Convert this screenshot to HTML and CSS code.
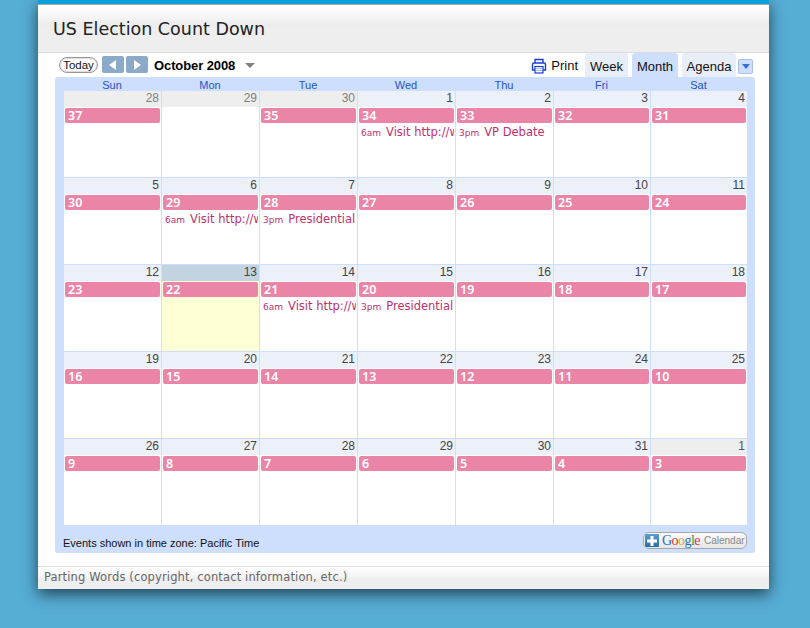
FILE: index.html
```html
<!DOCTYPE html>
<html lang="en">
<head>
<meta charset="utf-8">
<title>US Election Count Down</title>
<link rel="stylesheet" href="styles.css">
</head>
<body>
<div class="window">
  <header class="head"><h1>US Election Count Down</h1></header>
  <main class="main">
    <div class="toolbar">
      <div class="nav">
        <button class="today">Today</button>
        <span class="navbtn"><svg width="8" height="10" viewBox="0 0 8 10"><path d="M7 0v10L0 5z" fill="#fff"/></svg></span>
        <span class="navbtn"><svg width="8" height="10" viewBox="0 0 8 10"><path d="M1 0v10l7-5z" fill="#fff"/></svg></span>
        <span class="month">October 2008</span>
        <span class="caret"></span>
      </div>
      <div class="tabs">
        <svg class="printer" width="16" height="16" viewBox="0 0 16 16"><path d="M4 5V1.500h8V5M4 12H1.500V6.500q0-1.500 1.500-1.500h10q1.500 0 1.500 1.500V12H12" fill="none" stroke="#1a3fd8" stroke-width="1.400"/><rect x="4" y="8.500" width="8" height="6.500" fill="#fff" stroke="#1a3fd8" stroke-width="1.200"/><path d="M5.500 10.500h5M5.500 12.500h5" stroke="#5a78e0" stroke-dasharray="1 1"/></svg>
        <span class="print">Print</span>
        <span class="tab week">Week</span>
        <span class="tab active">Month</span>
        <span class="tab agenda">Agenda</span>
        <span class="menu"><span class="menu-caret"></span></span>
      </div>
    </div>
    <div class="cal">
      <div class="dows">
        <span>Sun</span><span>Mon</span><span>Tue</span><span>Wed</span><span>Thu</span><span>Fri</span><span>Sat</span>
      </div>
      <div class="grid">
        <div class="cell"><div class="date off">28</div><div class="bar">37</div></div>
        <div class="cell"><div class="date off">29</div></div>
        <div class="cell"><div class="date off">30</div><div class="bar">35</div></div>
        <div class="cell"><div class="date">1</div><div class="bar">34</div><div class="ev"><small>6am</small>Visit http://www.example</div></div>
        <div class="cell"><div class="date">2</div><div class="bar">33</div><div class="ev"><small>3pm</small>VP Debate</div></div>
        <div class="cell"><div class="date">3</div><div class="bar">32</div></div>
        <div class="cell"><div class="date">4</div><div class="bar">31</div></div>

        <div class="cell"><div class="date">5</div><div class="bar">30</div></div>
        <div class="cell"><div class="date">6</div><div class="bar">29</div><div class="ev"><small>6am</small>Visit http://www.example</div></div>
        <div class="cell"><div class="date">7</div><div class="bar">28</div><div class="ev"><small>3pm</small>Presidential Debate</div></div>
        <div class="cell"><div class="date">8</div><div class="bar">27</div></div>
        <div class="cell"><div class="date">9</div><div class="bar">26</div></div>
        <div class="cell"><div class="date">10</div><div class="bar">25</div></div>
        <div class="cell"><div class="date">11</div><div class="bar">24</div></div>

        <div class="cell"><div class="date">12</div><div class="bar">23</div></div>
        <div class="cell today-cell"><div class="date">13</div><div class="bar">22</div></div>
        <div class="cell"><div class="date">14</div><div class="bar">21</div><div class="ev"><small>6am</small>Visit http://www.example</div></div>
        <div class="cell"><div class="date">15</div><div class="bar">20</div><div class="ev"><small>3pm</small>Presidential Debate</div></div>
        <div class="cell"><div class="date">16</div><div class="bar">19</div></div>
        <div class="cell"><div class="date">17</div><div class="bar">18</div></div>
        <div class="cell"><div class="date">18</div><div class="bar">17</div></div>

        <div class="cell"><div class="date">19</div><div class="bar">16</div></div>
        <div class="cell"><div class="date">20</div><div class="bar">15</div></div>
        <div class="cell"><div class="date">21</div><div class="bar">14</div></div>
        <div class="cell"><div class="date">22</div><div class="bar">13</div></div>
        <div class="cell"><div class="date">23</div><div class="bar">12</div></div>
        <div class="cell"><div class="date">24</div><div class="bar">11</div></div>
        <div class="cell"><div class="date">25</div><div class="bar">10</div></div>

        <div class="cell"><div class="date">26</div><div class="bar">9</div></div>
        <div class="cell"><div class="date">27</div><div class="bar">8</div></div>
        <div class="cell"><div class="date">28</div><div class="bar">7</div></div>
        <div class="cell"><div class="date">29</div><div class="bar">6</div></div>
        <div class="cell"><div class="date">30</div><div class="bar">5</div></div>
        <div class="cell"><div class="date">31</div><div class="bar">4</div></div>
        <div class="cell"><div class="date off last">1</div><div class="bar">3</div></div>
      </div>
      <div class="calfoot">
        <span class="tz">Events shown in time zone: Pacific Time</span>
        <span class="badge">
          <span class="plus"><svg width="12" height="12" viewBox="0 0 12 12"><path d="M4.500 1h3v3.500H11v3H7.500V11h-3V7.500H1v-3h3.500z" fill="#fff"/></svg></span>
          <span class="glogo"><b class="g-b">G</b><b class="g-r">o</b><b class="g-y">o</b><b class="g-b">g</b><b class="g-g">l</b><b class="g-r">e</b></span>
          <span class="gcal">Calendar</span>
        </span>
      </div>
    </div>
  </main>
  <footer class="foot">Parting Words (copyright, contact information, etc.)</footer>
</div>
</body>
</html>
```
FILE: styles.css
```css
* { box-sizing: border-box; }
html, body { margin: 0; height: 628px; overflow: hidden; }
body { background: #56add5; font-family: "Liberation Sans", Arial, sans-serif; }

.window {
  width: 731px;
  height: 589px;
  margin-left: 38px;
  background: #fff;
  display: flex;
  flex-direction: column;
  box-shadow: 0 5px 14px rgba(0, 0, 0, .62);
}

.head {
  height: 53px;
  border-top: 4px solid #0a9fdb;
  border-bottom: 1px solid #dcdcdc;
  background: linear-gradient(#fff 1px, #f7f7f7 11px, #ebebeb 22px, #eee 23px, #eee);
  box-shadow: inset 0 1px 0 #a8a8a8;
  padding: 15px 0 0 15px;
}
.head h1 {
  margin: 0;
  font: 400 17.500px/20px "DejaVu Sans", sans-serif;
  color: #222;
}

.main { flex: 1; padding: 0 14px 0 17px; }

.toolbar {
  height: 24px;
  display: flex;
  justify-content: space-between;
  align-items: flex-start;
}
.nav { display: flex; align-items: center; margin: 3px 0 0 4px; height: 17px; }
.today {
  width: 39px;
  height: 16px;
  padding: 1px 0 0;
  border: 1px solid #999;
  border-radius: 8px;
  background: #fff;
  box-shadow: inset 0 0 0 1px #ddd;
  font: 11.500px/13px "Liberation Sans", sans-serif;
  color: #111;
  margin-right: 4px;
}
.navbtn {
  width: 22px;
  height: 17px;
  margin-right: 2px;
  background: #8aaac8;
  border-radius: 2px;
  display: flex;
  align-items: center;
  justify-content: center;
}
.month {
  font-size: 13px;
  line-height: 19px;
  padding-top: 1px;
  font-weight: 700;
  letter-spacing: -.1px;
  color: #000;
  margin-left: 4px;
}
.caret {
  margin-left: 10px;
  margin-top: 2px;
  border: 5px solid transparent;
  border-top: 5px solid #808080;
  border-bottom: 0;
}

.tabs { display: flex; align-items: flex-start; margin-right: 2px; }
.printer { margin-top: 5px; }
.print { font-size: 13px; line-height: 15px; margin: 5px 7px 0 4px; color: #111; }
.tab {
  height: 24px;
  font-size: 13px;
  line-height: 27px;
  text-align: center;
  color: #111;
  background: #e8eef7;
  border-radius: 3px 3px 0 0;
  margin-right: 4px;
}
.week { width: 43px; }
.active { width: 46px; background: #cddffc; }
.agenda { width: 54px; margin-right: 2px; }
.menu {
  width: 15px;
  height: 15px;
  margin-top: 6px;
  background: #cddffc;
  border: 1px solid #a9c3ee;
  border-radius: 2px;
  display: flex;
  align-items: center;
  justify-content: center;
}
.menu-caret {
  border: 4px solid transparent;
  border-top: 5px solid #3a6fd0;
  border-bottom: 0;
}

.cal {
  height: 476px;
  background: #cddffc;
  border-radius: 3px;
  padding: 0 8px 0 9px;
  display: flex;
  flex-direction: column;
}
.dows {
  height: 13px;
  margin-left: -1px;
  display: grid;
  grid-template-columns: repeat(5, 98px) 97px 1fr;
  font-size: 11px;
  line-height: 17px;
  text-align: center;
  color: #2952c8;
}
.grid {
  display: grid;
  grid-template-columns: repeat(5, 98px) 97px 1fr;
  grid-auto-rows: 87px;
}
.cell {
  background: #fff;
  border-top: 1px solid #cddffc;
  border-right: 1px solid #cddffc;
  min-width: 0;
  overflow: hidden;
}
.cell:nth-child(7n) { border-right: 0; }
.date {
  height: 16px;
  background: #ecf0f8;
  text-align: right;
  padding-right: 2px;
  font-size: 12px;
  line-height: 15px;
  color: #444;
}
.date.off { background: #eee; color: #808080; }
.date.last { color: #555; }
.bar {
  height: 15px;
  margin: 1px 1px 0;
  background: #eb85a8;
  border-radius: 2px;
  padding-left: 3px;
  font: 600 12.500px/15px "Noto Sans", sans-serif;
  color: #fff;
}
.ev {
  margin: 2px 1px 0 3px;
  font: 11.500px/14px "DejaVu Sans", sans-serif;
  color: #c0306c;
  white-space: nowrap;
  overflow: hidden;
}
.ev small { font-size: 9px; margin-right: 5px; }

.today-cell { background: #ffffd6; }
.today-cell .date { background: #c3d3e0; }

.calfoot {
  flex: 1;
  display: flex;
  justify-content: space-between;
  align-items: flex-start;
}
.tz { font-size: 11px; line-height: 14px; margin: 11px 0 0 -1px; color: #111; }
.badge {
  width: 104px;
  height: 17px;
  margin-top: 7px;
  padding-left: 1px;
  display: flex;
  align-items: center;
  border: 1px solid #a8a8a8;
  border-radius: 6px;
  background: linear-gradient(#fafafa, #e6e6e6);
  overflow: hidden;
}
.plus {
  width: 14px;
  height: 13px;
  background: linear-gradient(#5a9fd0, #2a6fa5);
  border-radius: 1px;
  display: flex;
  align-items: center;
  justify-content: center;
  flex: none;
}
.glogo {
  font: 14px/15px "Liberation Serif", serif;
  margin-left: 3px;
  letter-spacing: -.55px;
}
.glogo b { font-weight: 400; }
.g-b { color: #2a6fc0; }
.g-r { color: #d5324a; }
.g-y { color: #e0a520; }
.g-g { color: #3a9a48; }
.gcal { font-size: 10px; color: #888; margin-left: 4px; }

.foot {
  height: 23px;
  border-top: 1px solid #dcdcdc;
  background: linear-gradient(#fff, #f4f4f4 10px, #eee 11px);
  padding-left: 6px;
  font: 11.500px/20px "DejaVu Sans", sans-serif;
  letter-spacing: .14px;
  color: #666;
}
```
